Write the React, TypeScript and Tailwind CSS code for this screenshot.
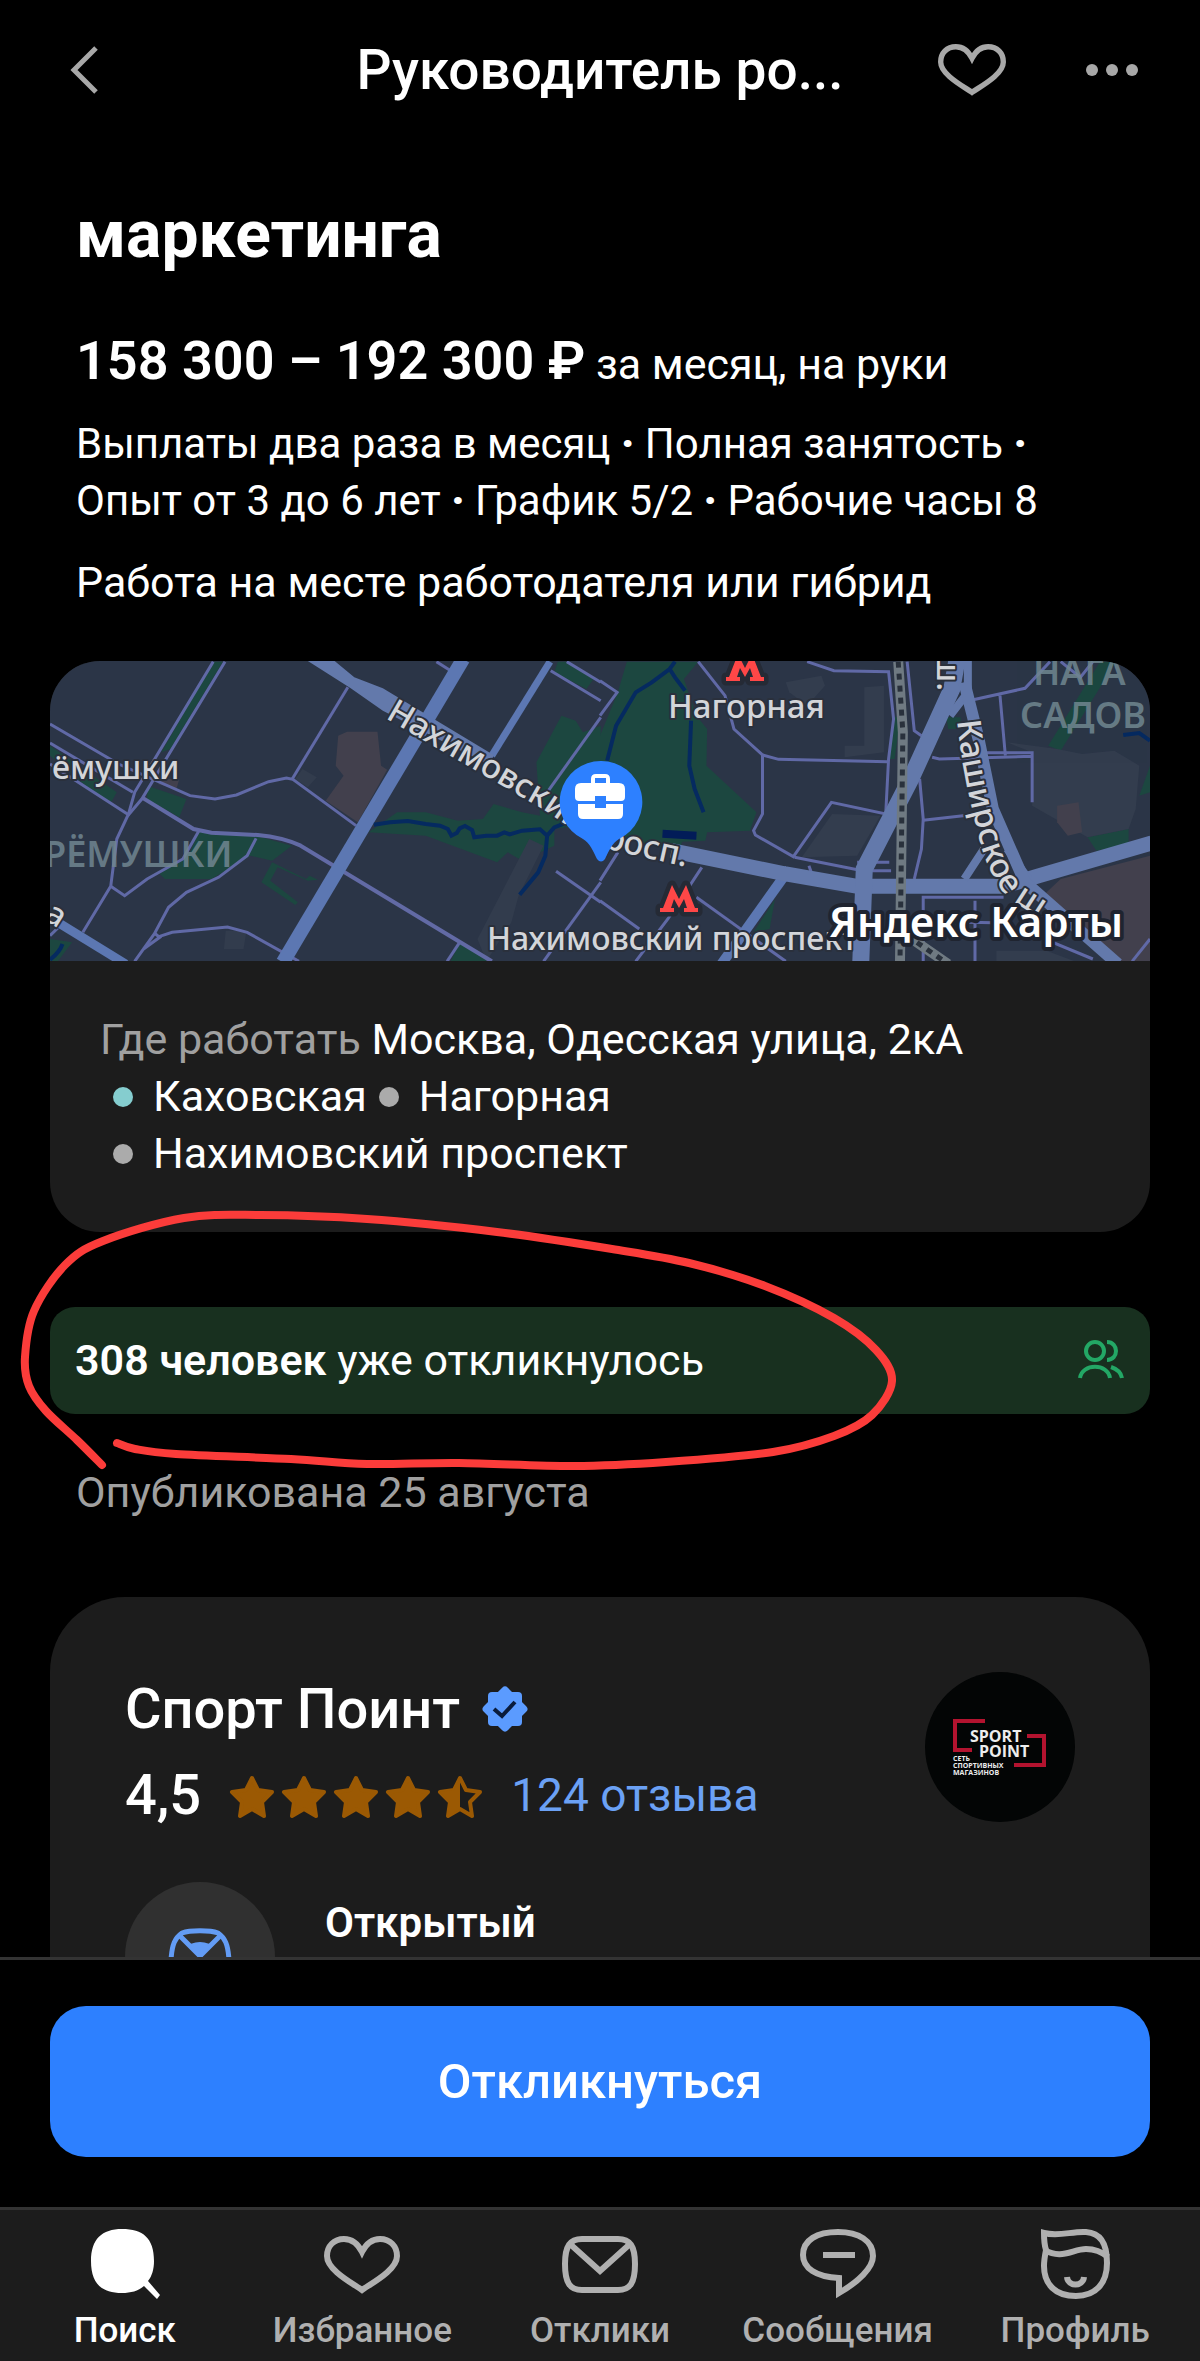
import type { ReactNode } from "react";

function HeartShape() {
  return (
    <path
      d="M38 64 C28 57 3 44 3 30 C3 20 10 13 20 13 C29 13 35 20 38 26 C41 20 47 13 56 13 C66 13 73 20 73 30 C73 44 48 57 38 64 Z"
      fill="none"
      stroke="currentColor"
      strokeWidth="6"
    />
  );
}

function TabIcon({ children }: { children: ReactNode }) {
  return (
    <svg viewBox="0 0 76 76" className="h-[76px] w-[76px]" fill="none" aria-hidden="true">
      {children}
    </svg>
  );
}

const tabs: { label: string; active?: boolean; icon: ReactNode }[] = [
  {
    label: "Поиск",
    active: true,
    icon: (
      <path
        d="M35 3 C56 3 67 12 67 35 C67 43 65 50 61 55 L73 69 L70 73 L57 60 C51 65 44 67 35 67 C14 67 4 57 4 35 C4 13 15 3 35 3 Z"
        fill="currentColor"
      />
    ),
  },
  { label: "Избранное", icon: <HeartShape /> },
  {
    label: "Отклики",
    icon: (
      <g stroke="currentColor" strokeWidth="6">
        <path d="M20 13 H56 C68 13 73 20 73 38 C73 57 68 64 56 64 H20 C8 64 3 57 3 38 C3 20 8 13 20 13 Z" />
        <path d="M8 18 L38 45 L68 18" />
      </g>
    ),
  },
  {
    label: "Сообщения",
    icon: (
      <g stroke="currentColor" strokeWidth="6">
        <path d="M39 67 V52 C16 51 3 42 3 29 C3 14 17 6 38 6 C59 6 73 15 73 30 C73 42 58 56 39 67 Z" />
        <path d="M23 29 H55" />
      </g>
    ),
  },
  {
    label: "Профиль",
    icon: (
      <g stroke="currentColor" strokeWidth="6">
        <path d="M7 7 C22 11 35 5 49 6 C64 7 70 18 70 37 C70 57 59 70 39 70 C18 70 7 58 7 40 C7 34 8 29 9 24 C7 18 7 13 7 7 Z" />
        <path d="M8 24 C24 34 36 23 49 23 C58 23 65 26 71 31" />
        <path d="M30 51 C31 61 46 61 47 51" />
      </g>
    ),
  },
];

function Star({ half = false }: { half?: boolean }) {
  const outline = "M23 3 L29 15 L43 17 L33 27 L35 41 L23 34 L11 41 L13 27 L3 17 L17 15 Z";
  const leftSide = "M23 3 V34 L11 41 L13 27 L3 17 L17 15 Z";
  return (
    <svg viewBox="0 0 46 44" className="h-11 w-[46px]" aria-hidden="true">
      <path d={outline} fill={half ? "none" : "#9b5903"} stroke="#9b5903" strokeWidth="4" strokeLinejoin="round" />
      {half && <path d={leftSide} fill="#9b5903" />}
    </svg>
  );
}

function MetroSign({ x, y }: { x: number; y: number }) {
  return (
    <g transform={`translate(${x} ${y})`} strokeLinejoin="round">
      <path
        d="M0 27 V23 H3 L12 0 L19 14 L26 0 L35 23 H38 V27 H24 V23 H27 L24 14 L19 23 L14 14 L11 23 H14 V27 Z"
        fill="#ff4747"
        stroke="#252a35"
        strokeWidth="9"
        paintOrder="stroke"
      />
    </g>
  );
}

function CityMap() {
  return (
    <svg
      viewBox="0 0 1100 300"
      preserveAspectRatio="xMidYMid slice"
      className="block h-[300px] w-full bg-[#2b3547]"
      role="img"
      aria-label="Карта: Москва, Одесская улица, 2кА"
    >
      <defs>
        <path id="nakhimovsky" d="M335 57 L494 149 C520 166 540 182 566 190 L690 218" />
        <path id="kashirskoe" d="M907 60 C910 90 916 125 925 160 C931 190 941 218 958 237 L1040 290" />
      </defs>

      {/* western half */}
      <g transform="matrix(.35714 0 0 .33333 -10 -12)" fill="none">
        <g fill="#1c4740">
          <path d="M485 38 H512 L365 300 L340 310 Z" />
          <path d="M28 290 L215 430 L200 458 L150 430 L28 320 Z" />
          <path d="M300 410 L410 450 L390 505 L300 450 Z" />
          <path d="M445 545 L620 565 L705 590 L650 635 L590 620 L480 690 L350 690 L335 675 L420 610 Z" />
          <path d="M650 640 L745 690 L755 680 L778 692 L750 695 L665 655 L645 695 L722 760 L715 768 L620 700 Z" />
          <path d="M28 870 L90 880 L50 937 H28 Z" />
          <path d="M920 550 L1000 490 L1080 490 L1170 515 L1240 510 L1270 465 L1350 490 L1400 500 L1390 340 L1460 200 L1500 215 L1520 250 L1570 230 V520 L1440 540 L1440 590 L1350 635 L1310 610 L1280 640 L1180 600 L1080 560 Z" />
          <path d="M1450 38 H1475 L1550 90 L1530 120 L1440 70 Z" />
          <path d="M1175 880 L1260 937 H1150 Z" />
        </g>
        <g fill="#42404d">
          <path d="M835 260 L860 248 H945 L955 350 L972 362 L890 520 L800 455 L850 380 L828 350 Z" />
          <path d="M350 390 H390 L382 420 L330 405 Z" />
        </g>
        <g fill="#323c4d">
          <path d="M1370 570 L1410 590 L1340 740 L1320 820 L1250 937 L1225 870 Z" />
          <path d="M520 845 H578 L570 900 H515 Z" />
          <path d="M735 360 L775 385 L750 415 L715 390 Z" />
        </g>
        <g stroke="#6069a6" strokeWidth="3">
          {[
            "M485 38 L265 430 L248 495 L215 570 L198 712 L120 850",
            "M518 38 L285 450 L248 497 L28 345",
            "M28 225 L220 345 L420 440 L490 450 L550 438 L640 398 L690 387 L708 391 L885 530",
            "M28 282 L260 430",
            "M862 115 L705 392",
            "M198 712 L237 740 L300 690 L400 630 L445 545",
            "M605 568 L580 620 L500 685 L410 730 L360 775 L320 855 L265 937",
            "M320 852 L335 865 L290 900 M335 862 L370 850 L525 834 L580 850 L725 937",
            "M1175 880 L1140 937",
            "M1570 205 L1420 430",
            "M1445 667 L1570 760",
            "M1570 700 L1410 937",
            "M1110 38 L1150 65",
            "M1430 65 L1570 155 M1475 38 L1570 100",
            "M28 860 L50 837",
          ].map((d) => (
            <path key={d} d={d} vectorEffect="non-scaling-stroke" />
          ))}
        </g>
        <path d="M285 445 L430 540 L480 551 L610 558 Q680 565 730 590 L1265 937" stroke="#626aa5" strokeWidth="4" vectorEffect="non-scaling-stroke" />
        <path d="M1428 38 L1265 320" stroke="#5c77b2" strokeWidth="7" vectorEffect="non-scaling-stroke" />
        <path d="M50 820 L240 945" stroke="#5c77b2" strokeWidth="9" vectorEffect="non-scaling-stroke" />
        <path d="M750 36 H825 L880 85 L960 118 L1270 318 L1260 350 L960 185 L870 118 Z" fill="#6379ab" />
        <path d="M1185 30 L680 940" stroke="#5c77b2" strokeWidth="14" vectorEffect="non-scaling-stroke" />
        <path
          d="M935 527 L980 520 L1030 516 L1080 525 L1120 530 L1142 540 L1152 560 L1167 552 L1175 538 L1190 531 L1210 543 L1216 565 L1250 560 L1280 560 L1300 550 L1315 556 L1350 545 L1400 541 L1420 560 L1440 535 L1465 525 M1420 560 L1415 620 L1395 670 L1343 737 M28 932 Q55 910 63 885"
          stroke="#052a60"
          strokeWidth="4"
          vectorEffect="non-scaling-stroke"
        />
      </g>

      {/* eastern half */}
      <g transform="matrix(.35714 0 0 .33333 550 -12)" fill="none">
        <g fill="#1c4740">
          <path d="M75 38 H275 L235 90 L270 200 L300 240 L298 350 L438 490 L420 545 L300 550 L295 575 L230 578 L220 610 L60 565 L0 540 V260 L50 130 Z" />
          <path d="M822 200 L840 210 L825 330 H808 Z" />
          <path d="M490 750 L475 840 L430 850 Z" />
          <path d="M970 205 H1010 V240 H975 Z" />
          <path d="M1400 38 H1445 L1290 305 L1255 290 Z" />
          <path d="M1365 565 L1480 540 V585 L1390 605 Z" />
          <path d="M1540 350 V430 L1510 440 Z" />
        </g>
        <g fill="#333d4e">
          <path d="M740 115 L795 110 V310 L685 325 V290 H740 Z" />
          <path d="M650 495 L785 500 L720 620 L565 625 Z" />
          <path d="M520 100 L620 80 L630 110 L580 170 L530 130 Z" />
          <path d="M1140 280 L1280 300 L1350 315 L1440 305 L1510 350 L1500 480 L1480 540 L1365 565 L1210 470 V310 Z" />
          <path d="M1110 905 H1250 L1330 937 H1110 Z" />
        </g>
        <g fill="#42404d">
          <path d="M1280 470 L1340 460 L1350 550 L1310 560 L1280 520 Z" />
          <path d="M1540 620 V937 H1440 L1240 740 L1290 690 Z" />
        </g>
        <g stroke="#6069a6" strokeWidth="3">
          {[
            "M0 95 L48 130 L0 200",
            "M275 38 L350 140 L375 240 L455 318 L455 495 L430 545 L435 558 L545 625",
            "M455 318 L500 331 L805 338",
            "M580 38 L655 65 L808 68 L822 210 L808 330 L800 495 L648 460 L540 625",
            "M860 38 L880 245 L900 260 M895 390 L905 510 L900 600 L880 690",
            "M930 325 L950 330 L1210 322 M1080 311 H1210 V460",
            "M1045 152 L1190 118 L1260 38 M1120 140 L1135 320",
            "M1290 38 L1345 85 L1380 38",
            "M905 514 L1035 498",
            "M0 695 L50 610 M0 755 L110 840 M285 655 L190 810 L100 937",
            "M270 745 L520 937",
            "M905 937 V745 H1130 M1050 755 V937",
            "M1030 820 L1140 822 M1200 850 L1380 930",
            "M545 625 L735 665 H815 M585 650 L595 680",
            "M1540 870 L1490 937",
            "M800 495 L735 640",
            "M810 640 H720",
          ].map((d) => (
            <path key={d} d={d} vectorEffect="non-scaling-stroke" />
          ))}
        </g>
        <path d="M530 660 L340 945" stroke="#5c77b2" strokeWidth="10" vectorEffect="non-scaling-stroke" />
        <path d="M200 605 L520 675 L720 712 L1130 712 L1230 680 L1545 582" stroke="#6379ab" strokeWidth="15" vectorEffect="non-scaling-stroke" />
        <path d="M1030 30 V130 L980 200 M1075 600 L1020 690 M1140 600 L1200 690" stroke="#6379ab" strokeWidth="8" vectorEffect="non-scaling-stroke" />
        <path d="M1000 30 L985 120 L870 390 L740 660 L730 945" stroke="#6379ab" strokeWidth="17" vectorEffect="non-scaling-stroke" />
        <path d="M1020 100 L1060 270 L1100 480 L1190 700 L1450 945" stroke="#6379ab" strokeWidth="12" vectorEffect="non-scaling-stroke" />
        <path d="M835 38 L848 250 L840 937 M860 860 L975 945" stroke="#6f7a82" strokeWidth="10" vectorEffect="non-scaling-stroke" />
        <path d="M835 38 L848 250 L840 937 M860 860 L975 945" stroke="#29313c" strokeWidth="5" strokeDasharray="6 6" vectorEffect="non-scaling-stroke" />
        <path
          d="M210 38 L195 60 L145 100 L100 130 L45 230 L20 335 M195 60 L210 85 L238 125 M255 215 L250 350 L265 420 L290 490 M1465 258 L1510 252 L1540 275"
          stroke="#052a60"
          strokeWidth="4"
          vectorEffect="non-scaling-stroke"
        />
        <path d="M175 554 L270 560" stroke="#021c58" strokeWidth="8" vectorEffect="non-scaling-stroke" />
      </g>

      <MetroSign x={676} y={-7} />
      <MetroSign x={610} y={224} />

      <g
        fontFamily='"Noto Sans", sans-serif'
        fill="#d3d5d9"
        stroke="#2a303c"
        strokeWidth="4"
        strokeLinejoin="round"
        paintOrder="stroke"
        fontWeight="500"
      >
        <text x="2" y="118" fontSize="32">ёмушки</text>
        <text x="618" y="57" fontSize="33">Нагорная</text>
        <text x="437" y="289" fontSize="32">Нахимовский проспект</text>
        <text x="-7" y="258" fontSize="32" transform="rotate(32 -7 258)">а</text>
        <text x="887" y="-8" fontSize="32" transform="rotate(90 887 -8)">ш.</text>
        <text fontSize="33">
          <textPath href="#nakhimovsky">Нахимовский просп.</textPath>
        </text>
        <text fontSize="33">
          <textPath href="#kashirskoe">Каширское ш.</textPath>
        </text>
      </g>
      <g fontFamily='"Noto Sans", sans-serif' fontWeight="600" fill="#708690" opacity="0.85">
        <text x="-6" y="206" fontSize="36">РЁМУШКИ</text>
        <text x="983" y="24" fontSize="36">НАГА</text>
        <text x="970" y="67" fontSize="36">САДОВ</text>
      </g>
      <text
        x="779"
        y="276"
        fontFamily='"Noto Sans", sans-serif'
        fontWeight="600"
        fontSize="42"
        fill="#ffffff"
        stroke="#1f2430"
        strokeWidth="8"
        strokeLinejoin="round"
        paintOrder="stroke"
      >
        Яндекс Карты
      </text>

      <path
        d="M551 100 A41 41 0 0 1 569 178 C562 182 559 190 555 198 Q551 203 547 198 C543 190 540 182 533 178 A41 41 0 0 1 551 100 Z"
        fill="#2d80ff"
      />
      <g fill="#ffffff">
        <path
          d="M541 122 V118 Q541 113 546 113 H555 Q560 113 560 118 V122 H569 Q575 122 575 128 V136 Q575 140 571 140 H556 V135 H545 V140 H529 Q525 140 525 136 V128 Q525 122 531 122 Z M545 122 H556 V117 H545 Z"
          fillRule="evenodd"
        />
        <path d="M528 143 H545 V147 H556 V143 H573 V153 Q573 158 568 158 H533 Q528 158 528 153 Z" />
      </g>
    </svg>
  );
}

const markerPoints = [
  [102, 258], [77, 233], [46, 204], [29, 179], [25, 150], [34, 104], [65, 58], [103, 34],
  [184, 11], [260, 8], [367, 12], [497, 25], [612, 42], [689, 56], [765, 79], [834, 111],
  [876, 143], [892, 174], [872, 208], [834, 229], [773, 245], [666, 255], [574, 259],
  [459, 256], [367, 257], [291, 252], [176, 247], [135, 242], [117, 236],
];

function smooth(points: number[][]) {
  let d = `M${points[0][0]} ${points[0][1]}`;
  for (let i = 0; i < points.length - 1; i++) {
    const a = points[i - 1] ?? points[i];
    const b = points[i];
    const c = points[i + 1];
    const e = points[i + 2] ?? c;
    d += ` C${b[0] + (c[0] - a[0]) / 6} ${b[1] + (c[1] - a[1]) / 6} ${c[0] - (e[0] - b[0]) / 6} ${c[1] - (e[1] - b[1]) / 6} ${c[0]} ${c[1]}`;
  }
  return d;
}

function Station({ name, className }: { name: string; className: string }) {
  return (
    <li className="flex items-center">
      <span className={`mr-5 h-5 w-5 rounded-full ${className}`} />
      {name}
    </li>
  );
}

const Dot = () => <b className="font-black">·</b>;

export default function App() {
  return (
    <div className="flex h-screen flex-col overflow-hidden bg-black font-[Roboto,sans-serif] text-[43px] leading-[57px] text-white">
      <header className="grid shrink-0 grid-cols-[1fr_auto_1fr] items-center px-[62px] py-9">
        <button type="button" aria-label="Назад" className="justify-self-start p-2 text-[#a8a8a8]">
          <svg viewBox="0 0 28 48" className="h-12 w-7" fill="none" stroke="currentColor" strokeWidth="5" aria-hidden="true">
            <path d="M26 2 L4 24 L26 46" />
          </svg>
        </button>
        <p className="text-[55px] leading-[68px] font-medium">Руководитель ро...</p>
        <div className="flex items-center justify-end gap-20 text-[#a8a8a8]">
          <button type="button" aria-label="В избранное">
            <svg viewBox="0 6 76 66" className="h-[60px] w-[68px]" aria-hidden="true">
              <HeartShape />
            </svg>
          </button>
          <button type="button" aria-label="Ещё">
            <svg viewBox="0 0 52 12" className="h-3 w-[52px]" fill="currentColor" aria-hidden="true">
              <circle cx="6" cy="6" r="6" />
              <circle cx="26" cy="6" r="6" />
              <circle cx="46" cy="6" r="6" />
            </svg>
          </button>
        </div>
      </header>

      <main className="min-h-0 flex-1 overflow-hidden px-[50px] pt-[55px]">
        <section className="px-[26px]">
          <h1 className="text-[66px] leading-[80px] font-bold">маркетинга</h1>
          <p className="mt-[54px] leading-[64px]">
            <strong className="text-[54px] font-semibold">158 300 – 192 300 ₽</strong> за месяц, на руки
          </p>
          <p className="mt-[19px] text-[42px]">
            Выплаты два раза в месяц <Dot /> Полная занятость <Dot />
            <br />
            Опыт от 3 до 6 лет <Dot /> График 5/2 <Dot /> Рабочие часы 8
          </p>
          <p className="mt-[25px]">Работа на месте работодателя или гибрид</p>
        </section>

        <section className="mt-[50px] overflow-hidden rounded-[50px] bg-[#1c1c1c]">
          <CityMap />
          <div className="px-[50px] py-[50px]">
            <p>
              <span className="text-[#a0a0a0]">Где работать</span> Москва, Одесская улица, 2кА
            </p>
            <ul className="flex flex-wrap gap-x-3 pl-[13px]">
              <Station name="Каховская" className="bg-[#85cdcf]" />
              <Station name="Нагорная" className="bg-[#ababab]" />
              <Station name="Нахимовский проспект" className="bg-[#ababab]" />
            </ul>
          </div>
        </section>

        <section className="relative mt-[75px]">
          <div className="flex items-center justify-between rounded-[25px] bg-[#18301f] p-[25px]">
            <p>
              <strong className="font-semibold">308 человек</strong> уже откликнулось
            </p>
            <svg viewBox="0 0 48 44" className="h-11 w-12" fill="none" stroke="#23a765" strokeWidth="4" aria-hidden="true">
              <circle cx="18" cy="12" r="9" />
              <path d="M30 3 C42 3 42 21 30 21" />
              <path d="M3 39 C5 24 31 24 33 39" />
              <path d="M34 28 C40 30 44 33 45 39" />
            </svg>
          </div>
          <svg
            viewBox="0 0 910 280"
            className="pointer-events-none absolute -top-[100px] -left-[50px] h-[280px] w-[910px]"
            fill="none"
            aria-hidden="true"
          >
            <path d={smooth(markerPoints)} stroke="#fb3c3a" strokeWidth="8" strokeLinecap="round" strokeLinejoin="round" />
          </svg>
        </section>
        <p className="mt-[50px] px-[26px] text-[#a0a0a0]">Опубликована 25 августа</p>

        <section className="mt-[76px] rounded-t-[75px] bg-[#1c1c1c] px-[75px] pt-[75px] pb-20">
          <div className="flex items-start justify-between">
            <div>
              <h2 className="flex items-center gap-[22px] text-[56px] leading-[74px] font-medium">
                Спорт Поинт
                <svg viewBox="0 0 46 46" className="h-[46px] w-[46px]" role="img" aria-label="Проверенный работодатель">
                  <rect x="6" y="6" width="34" height="34" rx="4" fill="#5b9bff" />
                  <rect x="6" y="6" width="34" height="34" rx="4" fill="#5b9bff" transform="rotate(45 23 23)" />
                  <path d="M12 23 L20 30 L33 16" fill="none" stroke="#0a1c3c" strokeWidth="4" />
                </svg>
              </h2>
              <div className="mt-3 flex items-center">
                <span className="text-[56px] leading-[74px] font-medium">4,5</span>
                <span className="mt-1 ml-7 flex gap-1.5" role="img" aria-label="4,5 из 5">
                  <Star />
                  <Star />
                  <Star />
                  <Star />
                  <Star half />
                </span>
                <a href="#reviews" className="ml-7 text-[46px] text-[#6ba1f5]">124 отзыва</a>
              </div>
            </div>
            <svg viewBox="0 0 150 150" className="h-[150px] w-[150px] shrink-0" role="img" aria-label="Sport Point">
              <circle cx="75" cy="75" r="75" fill="#030505" />
              <g fill="none" stroke="#b3132f" strokeWidth="4">
                <path d="M60 49 H30 V78 H47" />
                <path d="M102 64 H119 V93 H89" />
              </g>
              <g fill="#ededed" fontFamily='"Open Sans", sans-serif' fontWeight="700">
                <text x="45" y="70" fontSize="16">SPORT</text>
                <text x="54" y="85" fontSize="16">POINT</text>
                <text x="28" y="89" fontSize="7">СЕТЬ</text>
                <text x="28" y="96" fontSize="7">СПОРТИВНЫХ</text>
                <text x="28" y="103" fontSize="7">МАГАЗИНОВ</text>
              </g>
            </svg>
          </div>
          <div className="mt-[50px] flex gap-[50px]">
            <svg viewBox="0 0 150 150" className="h-[150px] w-[150px] shrink-0" fill="none" aria-hidden="true">
              <circle cx="75" cy="75" r="75" fill="#303030" />
              <g stroke="#639cf5" strokeWidth="5" strokeLinejoin="round">
                <path d="M46 78 C47 62 50 56 57 51 C65 48 85 48 93 51 C100 56 103 62 104 78 C104 95 98 102 75 102 C52 102 46 95 46 78 Z" />
                <path d="M54 53 L75 74 L96 53" />
                <path d="M67 64 Q75 61 83 64 L75 73 Z" fill="#639cf5" />
              </g>
            </svg>
            <p className="pt-3 text-[42px] font-semibold">
              Открытый
              <br />
              работодатель
            </p>
          </div>
        </section>
      </main>

      <div className="shrink-0 border-t-[3px] border-[#333333] px-[50px] pt-[46px] pb-[50px]">
        <button type="button" className="w-full rounded-[36px] bg-[#2d80ff] py-[43px] text-[49px] leading-[65px] font-medium">
          Откликнуться
        </button>
      </div>

      <nav className="shrink-0 border-t-[3px] border-[#333333] bg-[#1c1c1c] px-1.5 pt-4 pb-2">
        <ul className="grid grid-cols-5">
          {tabs.map((tab) => (
            <li key={tab.label}>
              <a
                href="#tab"
                aria-current={tab.active ? "page" : undefined}
                className={`flex flex-col items-center gap-[7px] text-[35px] leading-[44px] font-medium ${tab.active ? "text-white" : "text-[#b0b0b0]"}`}
              >
                <TabIcon>{tab.icon}</TabIcon>
                {tab.label}
              </a>
            </li>
          ))}
        </ul>
      </nav>
    </div>
  );
}
